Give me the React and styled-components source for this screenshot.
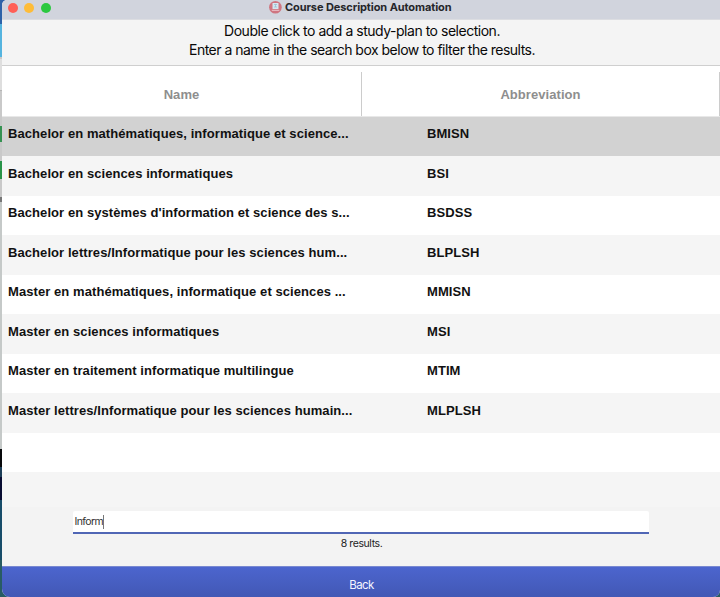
import React from 'react';
import styled, { createGlobalStyle } from 'styled-components';

const GlobalStyle = createGlobalStyle`
  *, *::before, *::after { box-sizing: border-box; }
  body { margin: 0; overflow: hidden; font-family: Inter, sans-serif; }
`;

const Desktop = styled.div`
  width: 720px;
  height: 597px;
  padding-left: 2px;
  background: linear-gradient(180deg,
    #2d62a8 0 24px, #55b4df 24px 57px, #c9c9c9 57px 59px, #dedede 59px 90px,
    #b5b5b5 90px 91px, #c9c9c9 91px 126px, #369252 126px 142px,
    #c9c9c9 142px 161px, #299348 161px 179px, #c9c9c9 179px 197px,
    #777 197px 202px, #c5c9c8 202px 449px, #08090c 449px 467px,
    #1c3e58 467px 477px, #080d32 477px 500px, #174c69 500px 560px, #285c63 560px);
`;

const Window = styled.main`
  height: 597px;
  display: flex;
  flex-direction: column;
  overflow: hidden;
  border-radius: 5px 0 7px 8px;
  background: #f4f4f4;
`;

const TitleBar = styled.header`
  height: 20px;
  flex: none;
  display: grid;
  grid-template-columns: 266px 1fr;
  background: #d1d4dd;
  border-bottom: 1px solid #dcdde1;
`;

const Controls = styled.div`
  display: flex;
  gap: 6.4px;
  padding: 3px 0 0 6px;
`;

const Control = styled.span`
  width: 10px;
  height: 10px;
  border-radius: 50%;
  background: ${({ $color }) => $color};
`;

const Title = styled.div`
  display: flex;
  gap: 3px;
  font-size: 11px;
  font-weight: 700;
  line-height: 15px;
  letter-spacing: -0.09px;
  color: #25262a;
  white-space: nowrap;
`;

const Intro = styled.div`
  height: 46px;
  flex: none;
  padding: 1px 0 0 2px;
  border-bottom: 1px solid #cfcfcf;
  color: #080808;
  text-align: center;
  font-size: 14px;
`;

const IntroLine = styled.p`
  margin: 0;
  line-height: 19px;
  letter-spacing: ${({ $spacing }) => $spacing};
  white-space: nowrap;
`;

const TableHead = styled.div`
  height: 50.5px;
  flex: none;
  display: grid;
  grid-template-columns: 360px 358px;
  padding-top: 6px;
  background: #fff;
  border-bottom: 1px solid #e8e8e8;
`;

const HeadCell = styled.div`
  display: flex;
  align-items: center;
  justify-content: center;
  padding-top: 2px;
  border-right: 1px solid #ccc;
  color: #8e8e8e;
  font: bold 13px "Liberation Sans", sans-serif;
  letter-spacing: 0.06px;
`;

const TableBody = styled.div`
  flex: none;
`;

const Row = styled.div`
  height: 39.5px;
  display: grid;
  grid-template-columns: 419px 1fr;
  padding: 9.7px 0 0 6px;
  background: ${({ $selected, $striped }) => $selected ? '#d2d2d2' : $striped ? '#f5f5f5' : '#fff'};
  color: #111;
  font: bold 13px/16px "Liberation Sans", sans-serif;
  letter-spacing: 0.075px;
  white-space: nowrap;
`;

const Search = styled.section`
  flex: 1;
  padding-top: 38.5px;
  background: linear-gradient(#f5f5f5 35px, #f3f3f3 35px);
`;

const Field = styled.div`
  width: 576px;
  height: 23px;
  margin-left: 71px;
  display: flex;
  align-items: center;
  padding: 1px 1px 0 1.5px;
  border-bottom: 2px solid #5066b5;
  border-radius: 2px 2px 0 0;
  background: #fff;
  color: #303030;
  font-size: 10.5px;
  letter-spacing: -0.6px;
`;

const Caret = styled.span`
  width: 1px;
  height: 14px;
  background: #777;
`;

const Results = styled.div`
  padding: 3px 0 0 1px;
  text-align: center;
  color: #242424;
  font-size: 10.5px;
  line-height: 14px;
  letter-spacing: -0.4px;
`;

const BackButton = styled.button`
  height: 31px;
  flex: none;
  padding: 5px 0 0 1px;
  border: 0;
  border-top: 1px solid #7888d0;
  background: linear-gradient(#4c65ce, #4258b5);
  color: #f4f5ff;
  font: 11.5px Inter, sans-serif;
  letter-spacing: -0.6px;
`;

const plans = [
  ['Bachelor en mathématiques, informatique et science...', 'BMISN'],
  ['Bachelor en sciences informatiques', 'BSI'],
  ["Bachelor en systèmes d'information et science des s...", 'BSDSS'],
  ['Bachelor lettres/Informatique pour les sciences hum...', 'BLPLSH'],
  ['Master en mathématiques, informatique et sciences ...', 'MMISN'],
  ['Master en sciences informatiques', 'MSI'],
  ['Master en traitement informatique multilingue', 'MTIM'],
  ['Master lettres/Informatique pour les sciences humain...', 'MLPLSH'],
  ['', ''],
];

function AppIcon() {
  return (
    <svg width="14" height="14" viewBox="0 0 14 14">
      <circle cx="7.4" cy="7.3" r="6.3" fill="#cf7580" />
      <rect x="4.5" y="3" width="6" height="6" rx=".5" fill="#d5e7f0" />
      <path d="M6 4.5h3M6 7h3M7.5 4.5v2.5" fill="none" stroke="#7aaac6" strokeWidth=".5" />
      <path d="M3.8 10.3h7.5" stroke="#edc7cd" strokeWidth="1" />
    </svg>
  );
}

export default function App() {
  return (
    <>
      <GlobalStyle />
      <Desktop>
        <Window>
          <TitleBar>
            <Controls>
              <Control $color="#ff5f57" />
              <Control $color="#febc38" />
              <Control $color="#2bc840" />
            </Controls>
            <Title><AppIcon /><span>Course Description Automation</span></Title>
          </TitleBar>
          <Intro>
            <IntroLine $spacing="-0.48px">Double click to add a study-plan to selection.</IntroLine>
            <IntroLine $spacing="-0.51px">Enter a name in the search box below to filter the results.</IntroLine>
          </Intro>
          <TableHead>
            <HeadCell>Name</HeadCell>
            <HeadCell>Abbreviation</HeadCell>
          </TableHead>
          <TableBody>
            {plans.map(([name, code], i) => (
              <Row key={i} $selected={i === 0} $striped={i % 2 === 1}>
                <span>{name}</span>
                <span>{code}</span>
              </Row>
            ))}
          </TableBody>
          <Search>
            <Field>Inform<Caret /></Field>
            <Results>8 results.</Results>
          </Search>
          <BackButton>Back</BackButton>
        </Window>
      </Desktop>
    </>
  );
}
